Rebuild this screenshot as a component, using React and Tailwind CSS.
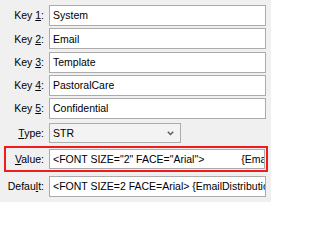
import React from 'react';

const Field = ({ children }) => (
  <div className="ml-[5px] w-[217px] h-[21px] border border-[#ababab] bg-white pl-[3px] flex items-center whitespace-nowrap overflow-hidden">
    {children}
  </div>
);

const Label = ({ pre, u, post, w = 'w-[44px]' }) => (
  <div className={`${w} text-right shrink-0`}>
    {pre}
    <span className="underline underline-offset-[1px]">{u}</span>
    {post}
  </div>
);

const keys = [
  { n: '1', v: 'System' },
  { n: '2', v: 'Email' },
  { n: '3', v: 'Template' },
  { n: '4', v: 'PastoralCare' },
  { n: '5', v: 'Confidential' },
];

export default function App() {
  return (
    <div className="w-[271px] h-[202px] bg-[#f0f0f0] pt-[5px] overflow-hidden text-black text-[10.5px] font-['Liberation_Sans',Arial,sans-serif] leading-none">
      <div className="flex flex-col gap-[2.25px]">
        {keys.map((k) => (
          <div key={k.n} className="flex items-center">
            <Label pre="Key " u={k.n} post=":" />
            <Field>{k.v}</Field>
          </div>
        ))}
      </div>

      <div className="flex items-center mt-[4px]">
        <Label pre="" u="T" post="ype:" />
        <div className="ml-[5px] w-[132px] h-[20px] border border-[#adadad] bg-[#f3f3f3] pl-[3px] pr-[6px] flex items-center justify-between">
          <span>STR</span>
          <svg width="7" height="5" viewBox="0 0 7 5">
            <polyline points="0.8,0.8 3.5,3.6 6.2,0.8" fill="none" stroke="#5a5a5a" strokeWidth="1.4" />
          </svg>
        </div>
      </div>

      <div className="ml-[4px] mt-[3px] w-[264px] h-[26px] border-2 border-[#ee1c1c] flex items-center">
        <Label pre="" u="V" post="alue:" w="w-[38px]" />
        <div className="ml-[5px] w-[216px] h-[20px] border border-[#ababab] bg-white pl-[3px] flex items-center whitespace-nowrap overflow-hidden">
          <span>{'<FONT SIZE="2" FACE="Arial">'}</span>
          <span className="ml-[37px]">{'{EmailDistribution}'}</span>
        </div>
      </div>

      <div className="flex items-center mt-[4px]">
        <Label pre="Defau" u="l" post="t:" />
        <Field>{'<FONT SIZE=2 FACE=Arial> {EmailDistribution}'}</Field>
      </div>
    </div>
  );
}
